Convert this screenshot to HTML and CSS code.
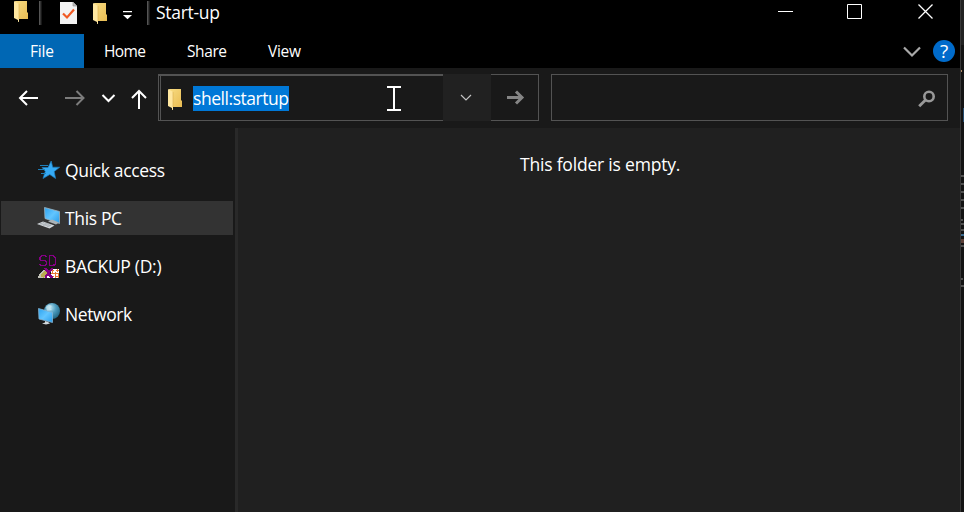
FILE: index.html
```html
<!DOCTYPE html>
<html lang="en">
<head>
<meta charset="utf-8">
<title>Start-up</title>
<link rel="stylesheet" href="styles.css">
</head>
<body>
<svg class="defs" width="0" height="0">
  <defs>
    <linearGradient id="gold" x1="0" y1="0" x2="1" y2="1"><stop offset="0" stop-color="#f8dc83"/><stop offset="1" stop-color="#e9bc52"/></linearGradient>
    <linearGradient id="screen" x1="0" y1="0" x2="1" y2="1"><stop offset="0" stop-color="#2ca2ef"/><stop offset=".5" stop-color="#62c5ff"/><stop offset="1" stop-color="#269bea"/></linearGradient>
    <radialGradient id="globe" cx=".4" cy=".3" r=".7"><stop offset="0" stop-color="#b9e3f2"/><stop offset=".5" stop-color="#4d9bbd"/><stop offset="1" stop-color="#236885"/></radialGradient>
    <symbol id="folder" viewBox="0 0 15 22"><path d="M1 1h12v11l1 1v6H4z" fill="url(#gold)"/><path d="M0 1l5 3v18l-1-.2V20L0 18z" fill="#ffe7a0"/><path d="M5 4v15" stroke="#d9ac4b" stroke-width=".6"/></symbol>
  </defs>
</svg>
<div class="desktop">
  <div class="window">
    <header class="titlebar">
      <svg class="folder-app" width="15" height="22"><use href="#folder"/></svg>
      <i class="sep sep-first"></i>
      <svg class="doc" width="17" height="22"><path d="M0 0h13l4 4v18H0z" fill="#f3f3f3"/><path d="M13 0v4h4" fill="#bbb" stroke="#999" stroke-width=".7"/><path d="M3 11.500l4 4 7-8" fill="none" stroke="#f15a24" stroke-width="2.200"/></svg>
      <svg class="folder-new" width="15" height="22"><use href="#folder"/></svg>
      <svg class="customize" width="10" height="9"><path d="M0 0h9v1.200H0zM0 4h9L4.500 8.300z" fill="#fff"/></svg>
      <i class="sep sep-last"></i>
      <span class="title">Start-up</span>
      <svg class="controls" width="156" height="24"><g fill="none" stroke="#fff" stroke-width="1"><path d="M0 11.500h15M69.500 4.500h14v14h-14z"/><path d="M140.500 4.500l14 14M154.500 4.500l-14 14" stroke-width="1.300"/></g></svg>
    </header>
    <nav class="ribbon">
      <span class="tab file">File</span><span class="tab home">Home</span><span class="tab share">Share</span><span class="tab view">View</span>
      <svg class="expand" width="18" height="11"><path d="M1 1.500l8 8 8-8" fill="none" stroke="#a9a9a9" stroke-width="2.200"/></svg>
      <span class="help">?</span>
    </nav>
    <div class="toolbar">
      <svg class="arrows" width="130" height="22"><g fill="none" stroke="#fff" stroke-width="2"><path d="M20 11H2M9 4l-7 7 7 7"/><path d="M47 11h18M58.500 4l7 7-7 7" stroke="#7c7c7c"/><path d="M84.500 8l6 6 6-6"/><path d="M121 22V4M114 11l7-7 7 7"/></g></svg>
      <div class="address">
        <div class="path">
          <svg width="15" height="22"><use href="#folder"/></svg>
          <span class="selection">shell:startup</span>
          <svg class="caret" width="14" height="25"><path d="M0 1h5.500M8.500 1H14M0 24h5.500M8.500 24H14M7 1v23M5 1h4M5 24h4" stroke="#fff" stroke-width="2"/></svg>
        </div>
        <div class="drop"><svg width="12" height="7"><path d="M1 1l5 5 5-5" fill="none" stroke="#c4c4c4" stroke-width="1.200"/></svg></div>
        <div class="go"><svg width="18" height="15"><path d="M0 7.500h15M9 1.500l6 6-6 6" fill="none" stroke="#858585" stroke-width="3"/></svg></div>
      </div>
      <div class="search"><svg width="18" height="18"><circle cx="11" cy="6.500" r="4.700" fill="none" stroke="#989898" stroke-width="2.600"/><path d="M7.500 10L1.200 16.300" stroke="#989898" stroke-width="2.800"/></svg></div>
    </div>
    <div class="content">
      <aside class="sidebar">
        <div class="item"><svg width="24" height="24"><path d="M13.200 3l1.500 6.200h7L16.200 13.600 17.600 20.500l-5.800-4L5 20.500 7.300 13.300 4 9.500h6z" fill="#35aaf5" stroke="#1c7cbd" stroke-width=".7"/><path d="M2 7.500h8M0 11.500h7M3 15.500h5" stroke="#1e7fba" stroke-width="1"/></svg><span class="quick">Quick access</span></div>
        <div class="item selected"><svg width="24" height="24"><path d="M6.500 1.500l15 4v12L7 12.500z" fill="url(#screen)" stroke="#9eb5c2" stroke-width=".8"/><path d="M10 15.500l4-2 7 3-3 2z" fill="#aab1b5"/><path d="M-1 18l6-2.500 11.500 4-5 3z" fill="#d3d7db"/><path d="M2 17.500l9.500 3M5 16.500l8 3M1 18.500l5-2M5 19.500l5-2M9 20.500l5-2" stroke="#929aa1" stroke-width=".5"/></svg><span class="pc">This PC</span></div>
        <div class="item"><svg width="24" height="24" shape-rendering="crispEdges"><g fill="none" stroke="#850085" stroke-width="1.500"><path d="M8.500 3.500L7 1.700H3.500L2 3.500v1.800L3.500 6.500h3.500L8.500 8v2L7 11.500H3.500L1.700 10M11.500 1.700h4l2 2v6l-2 1.800h-4z"/></g><path d="M0 24c1-5 4-8 9-9v9z" fill="#c2c2b8"/><path d="M3 23c0-4 3-7 6-7v4l-3 4z" fill="#b8ab50"/><path d="M8 20h5v4H8zM13 15h8v9h-8z" fill="#fff"/><path d="M13 16.500h3M18 16.500h3M13 19.500h8M14 22.500h2M18 22.500h2M14.500 15v4M19.500 15v3M17.500 18v6M20.500 20v4" fill="none" stroke="#e87832"/><path d="M6 14h3l2 3 2-3h2v1l-3 4 3 4v1h-3l-2-3-1 3H7v-2l2-3z" fill="#850085"/></svg><span class="backup">BACKUP (D:)</span></div>
        <div class="item"><svg width="24" height="24"><circle cx="14" cy="9" r="8" fill="url(#globe)"/><path d="M8 5c3-4 6-1 6-1l-2 2 2 2-5 1z" fill="#d4edf5" opacity=".65"/><path d="M.5 6.500l14 4v10L1 17z" fill="url(#screen)" stroke="#85b4d2" stroke-width=".8"/><path d="M7 19v1.500l-3 1 4 1 4-1-2-1.500z" fill="#d2d8dc"/></svg><span class="network">Network</span></div>
      </aside>
      <main class="files"><span class="empty">This folder is empty.</span></main>
    </div>
  </div>
  <div class="behind"><svg width="3" height="512"><path d="M0 0h3v45H0z" fill="#222"/><path d="M0 70h1v2H0z" fill="#b08b69"/><path d="M2 108h1v14H2z" fill="#264d70"/><path d="M0 176h3M0 184h3M0 192h3M0 200h3M0 208h3M0 220h2M0 224h3M0 230h3M0 246h3M0 279h2M0 286h3" stroke="#666" stroke-width="1.500"/><path d="M0 234h3v2H0z" fill="#39698e"/><path d="M0 239h3v4H0z" fill="#5d4037"/></svg></div>
</div>
</body>
</html>
```
FILE: styles.css
```css
* { box-sizing: border-box; }
body { margin: 0; background: #111; color: #fff; font: 17.5px/24px "Open Sans", "Noto Sans", sans-serif; overflow: hidden; }
svg { display: block; flex: none; overflow: visible; }
span { white-space: nowrap; }
.defs { position: absolute; }
.desktop { display: flex; width: 964px; height: 512px; }
.window { width: 961px; height: 512px; border-right: 1px solid #383838; background: #191919; }
.behind { width: 3px; background: #141414; }
.titlebar { height: 34px; display: flex; align-items: flex-start; background: #000; }
.folder-app { margin-left: 14px; }
.sep { width: 3px; height: 24px; margin-top: 1px; background: #333; border-left: 1px solid #555; border-right: 1px solid #181818; }
.sep-first { margin-left: 10px; }
.doc { margin: 2px 0 0 18px; }
.folder-new { margin: 2px 0 0 16px; }
.customize { margin: 11px 0 0 15px; }
.sep-last { margin-left: 14px; }
.title { width: 68px; margin: 0 0 0 6px; letter-spacing: -.3px; }
.controls { margin-left: auto; margin-right: 26px; }
.ribbon { height: 34px; display: flex; align-items: center; background: #000; font-size: 15.5px; }
.tab { height: 34px; line-height: 34px; }
.file { width: 84px; padding-left: 30px; background: #0067b4; letter-spacing: -.2px; }
.home { width: 83px; padding-left: 20px; letter-spacing: -.6px; }
.share { width: 81px; padding-left: 20px; letter-spacing: -.4px; }
.view { padding-left: 20px; letter-spacing: -.3px; }
.expand { margin-left: auto; }
.help { width: 22px; height: 22px; margin: 0 5px 0 12px; border-radius: 50%; background: #006bcb; text-align: center; line-height: 22px; font-size: 19px; }
.toolbar { height: 60px; display: flex; align-items: flex-start; padding: 6px 12px 0 18px; }
.arrows { margin-top: 13px; }
.address { display: flex; width: 381px; height: 47px; margin-left: 10px; }
.path { display: flex; align-items: center; width: 285px; border: solid #535353; border-width: 2px 0 1px 1px; padding: 1px 0 0 9px; box-shadow: inset 1px 0 #191919, inset 2px 0 #535353; }
.selection { height: 25px; line-height: 25px; width: 96px; margin-left: 10px; background: #0078d7; letter-spacing: -.45px; }
.caret { margin-left: 98px; }
.drop { display: flex; align-items: center; justify-content: center; width: 48px; padding-right: 2px; background: #212121; }
.go { display: flex; align-items: center; justify-content: center; width: 48px; padding-left: 3px; border: solid #535353; border-width: 1px 1px 1px 0; }
.search { display: flex; align-items: center; justify-content: flex-end; width: 397px; height: 47px; margin-left: 12px; padding: 2px 11px 0 0; border: 1px solid #535353; }
.content { display: flex; height: 384px; }
.sidebar { display: flex; flex-direction: column; gap: 14px; width: 238px; padding: 25px 2px 0 1px; border-right: 3px solid #292929; }
.item { display: flex; align-items: center; width: 232px; height: 34px; padding-left: 37px; }
.item span { margin-left: 3px; }
.selected { background: #333; }
.quick { letter-spacing: -.35px; }
.pc { letter-spacing: -.35px; }
.backup { letter-spacing: -.3px; }
.network { letter-spacing: -.4px; }
.files { flex: 1; padding: 24px 0 0 282px; background: #202020; }
.empty { letter-spacing: -.2px; }
```
